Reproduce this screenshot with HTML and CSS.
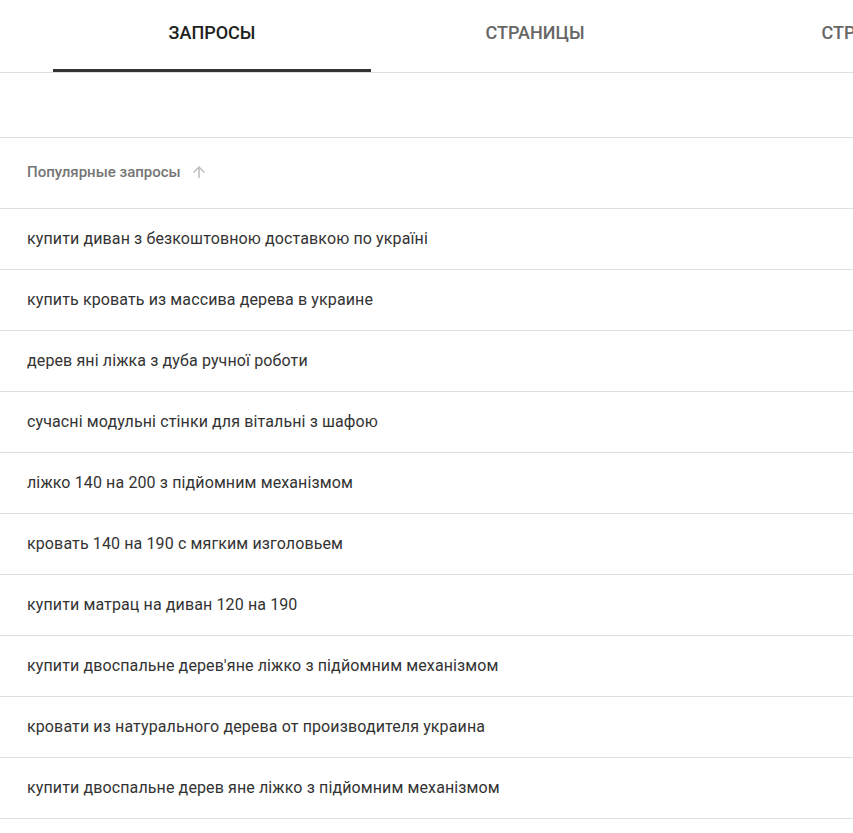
FILE: index.html
```html
<!DOCTYPE html>
<html lang="ru">
<head>
<meta charset="utf-8">
<title>Запросы</title>
<link rel="stylesheet" href="styles.css">
</head>
<body>
<div class="page">
  <nav class="tabs">
    <div class="tab active">ЗАПРОСЫ</div>
    <div class="tab">СТРАНИЦЫ</div>
    <div class="tab">СТРАНЫ</div>
  </nav>
  <div class="spacer"></div>
  <div class="table">
    <div class="head">
      <span class="head-label">Популярные запросы</span>
      <svg class="sort" width="18" height="18" viewBox="0 0 24 24"><path d="M4 12l1.41 1.41L11 7.83V20h2V7.83l5.58 5.59L20 12l-8-8-8 8z" fill="currentColor"/></svg>
    </div>
    <div class="row">купити диван з безкоштовною доставкою по україні</div>
    <div class="row">купить кровать из массива дерева в украине</div>
    <div class="row">дерев яні ліжка з дуба ручної роботи</div>
    <div class="row">сучасні модульні стінки для вітальні з шафою</div>
    <div class="row">ліжко 140 на 200 з підйомним механізмом</div>
    <div class="row">кровать 140 на 190 с мягким изголовьем</div>
    <div class="row">купити матрац на диван 120 на 190</div>
    <div class="row">купити двоспальне дерев'яне ліжко з підйомним механізмом</div>
    <div class="row">кровати из натурального дерева от производителя украина</div>
    <div class="row">купити двоспальне дерев яне ліжко з підйомним механізмом</div>
  </div>
</div>
</body>
</html>
```
FILE: styles.css
```css
html, body {
  margin: 0;
  padding: 0;
  background: #fff;
  overflow: hidden;
}
body {
  font-family: Roboto, "Liberation Sans", sans-serif;
  color: #333;
}
.page {
  width: 853px;
}
.tabs {
  display: flex;
  gap: 5px;
  padding-left: 53px;
  height: 72px;
  border-bottom: 1px solid #e0e0e0;
  white-space: nowrap;
  overflow: hidden;
}
.tab {
  flex: 0 0 318px;
  display: flex;
  align-items: center;
  justify-content: center;
  box-sizing: border-box;
  padding-bottom: 4px;
  font-size: 18px;
  font-weight: 500;
  color: #666;
  border-bottom: 3px solid transparent;
}
.tab.active {
  color: #212121;
  border-bottom-color: #333;
}
.spacer {
  height: 64px;
  border-bottom: 1px solid #e0e0e0;
}
.head {
  height: 71px;
  display: flex;
  align-items: center;
  padding-left: 27px;
  padding-bottom: 2px;
  box-sizing: border-box;
  gap: 9px;
  border-bottom: 1px solid #e0e0e0;
  font-size: 15px;
  font-weight: 500;
  color: #757575;
}
.sort {
  color: #bdbdbd;
}
.row {
  height: 61px;
  display: flex;
  align-items: center;
  padding-left: 27px;
  padding-bottom: 1px;
  box-sizing: border-box;
  border-bottom: 1px solid #e0e0e0;
  font-size: 16px;
  letter-spacing: 0.12px;
  color: #333;
}
```
